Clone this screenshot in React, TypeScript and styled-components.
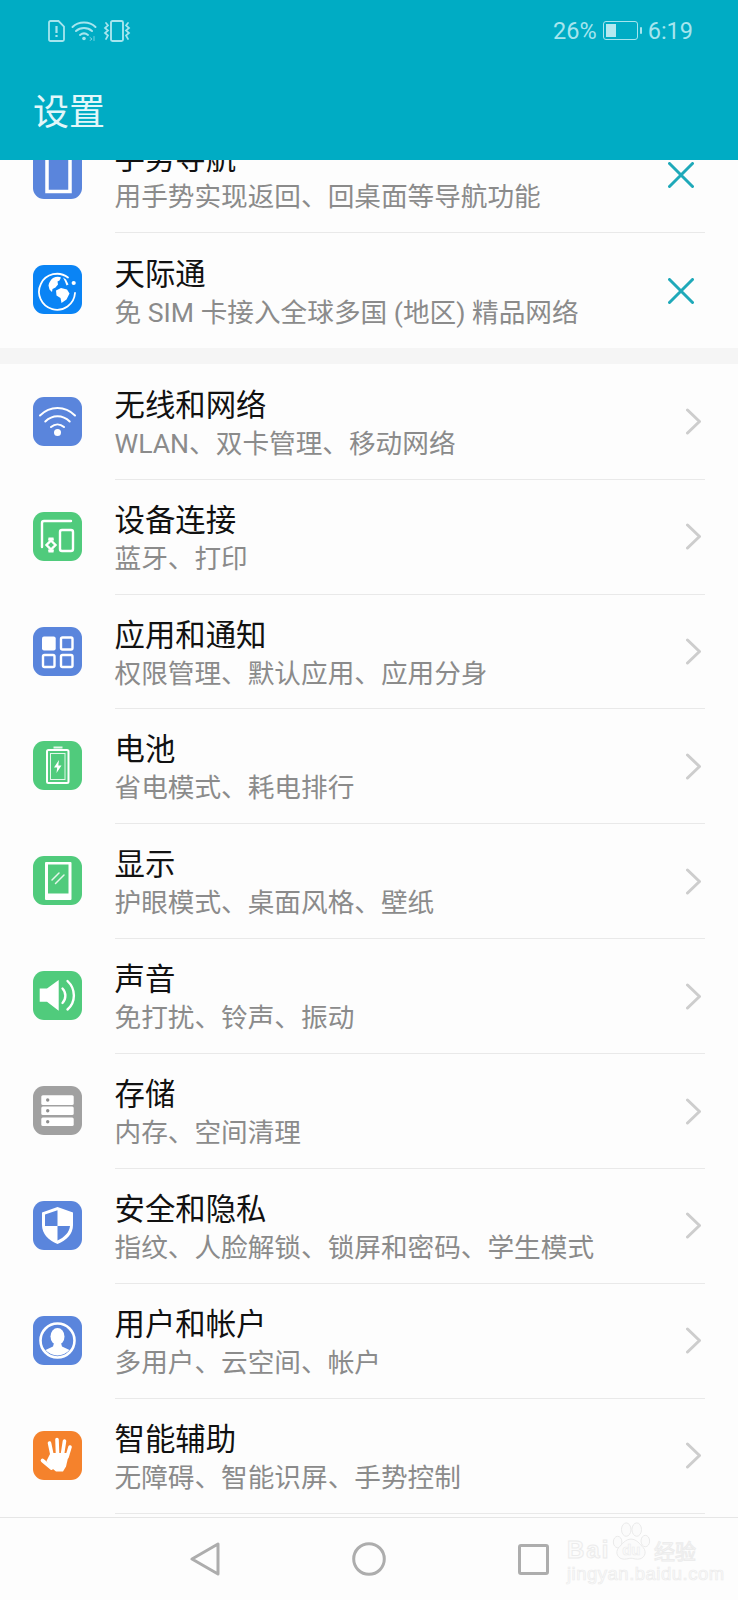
import React from 'react';
import styled, { createGlobalStyle } from 'styled-components';

const GlobalStyle = createGlobalStyle`
  html, body {
    margin: 0;
    padding: 0;
    background: #fdfdfd;
  }
  * {
    box-sizing: border-box;
  }
`;

const Screen = styled.div`
  width: 738px;
  height: 1600px;
  display: flex;
  flex-direction: column;
  overflow: hidden;
  position: relative;
  background: #fdfdfd;
  font-family: Roboto, 'Noto Sans CJK SC', sans-serif;
`;

const Header = styled.header`
  height: 160px;
  flex: none;
  background: #00acc4;
  position: relative;
  z-index: 1;
`;

const StatusBar = styled.div`
  height: 60px;
  padding: 1px 45px 0 48px;
  display: flex;
  align-items: center;
  justify-content: space-between;
  color: #a6e5ee;
  font-size: 23.5px;
`;

const StatusGroup = styled.div`
  display: flex;
  align-items: center;
  gap: 6px;
`;

const PageTitle = styled.h1`
  margin: 0;
  padding: 19px 0 0 33px;
  font-size: 36px;
  line-height: 68px;
  font-weight: 400;
  color: #e2f7fa;
`;

const Scroller = styled.main`
  flex: 1;
  min-height: 0;
  overflow: hidden;
`;

const List = styled.div`
  margin-top: -41.5px;
`;

const Group = styled.section<{ $spaced?: boolean }>`
  background: #fdfdfd;
  border-top: ${(p) => (p.$spaced ? '16px solid #f5f5f5' : 'none')};
  padding-top: ${(p) => (p.$spaced ? '0.5px' : '0')};
`;

const Row = styled.div`
  height: 114.9px;
  display: flex;
  align-items: stretch;
  padding: 0 33px 0 32.5px;
`;

const IconTile = styled.div`
  width: 49px;
  flex: none;
  align-self: center;
  display: flex;
  margin-bottom: 2px;
`;

const RowBody = styled.div<{ $noRule?: boolean }>`
  flex: 1;
  margin-left: 33px;
  display: flex;
  align-items: center;
  justify-content: space-between;
  border-bottom: ${(p) => (p.$noRule ? 'none' : '1.5px solid #e9e9e9')};
`;

const RowText = styled.div`
  display: flex;
  flex-direction: column;
  padding-top: 5px;
`;

const RowTitle = styled.div`
  font-size: 30.4px;
  line-height: 40px;
  color: #111;
`;

const RowSubtitle = styled.div`
  font-size: 26.65px;
  line-height: 37px;
  color: #8b8b8b;
  white-space: nowrap;
`;

const Trailing = styled.div<{ $wide?: boolean }>`
  width: ${(p) => (p.$wide ? '37px' : '19px')};
  flex: none;
  display: flex;
  align-items: center;
`;

const NavBar = styled.nav`
  height: 83px;
  flex: none;
  background: #fdfdfd;
  border-top: 1.5px solid #e6e6e6;
  display: flex;
  align-items: center;
  justify-content: center;
  position: relative;
`;

const NavSlot = styled.div`
  width: 164px;
  display: flex;
  justify-content: center;
`;

const Watermark = styled.div`
  position: absolute;
  left: 567px;
  top: 3px;
  width: 132px;
  color: #fbfbfb;
  font-family: 'Liberation Sans', sans-serif;
  -webkit-text-stroke: 1px #ececec;
  pointer-events: none;
`;

const MarkTop = styled.div`
  display: flex;
  align-items: flex-end;
  justify-content: space-between;
  height: 42px;
`;

const MarkBrand = styled.span`
  flex: none;
  font-size: 24px;
  line-height: 26px;
  font-weight: 700;
  letter-spacing: 2px;
`;

const MarkPaw = styled.div`
  flex: none;
  width: 42px;
  height: 42px;
  position: relative;
  margin-left: -2px;
`;

const MarkPawText = styled.span`
  position: absolute;
  left: 12px;
  bottom: 5px;
  font-size: 15px;
  line-height: 16px;
  font-weight: 700;
  -webkit-text-stroke-width: 0.6px;
`;

const MarkCn = styled.span`
  flex: none;
  font-size: 21px;
  line-height: 26px;
  font-family: 'Noto Sans CJK SC', sans-serif;
  white-space: nowrap;
  margin-right: 3px;
`;

const MarkUrl = styled.div`
  font-size: 18.5px;
  line-height: 22px;
  white-space: nowrap;
  letter-spacing: 0.5px;
  -webkit-text-stroke-width: 0.7px;
`;

const BLUE = '#5a85dc';
const GREEN = '#50cb7c';

const Tile = ({ color, children }: { color: string; children: React.ReactNode }) => (
  <svg width="49" height="49" viewBox="0 0 49 49">
    <rect width="49" height="49" rx="11" fill={color} />
    {children}
  </svg>
);

const icons = {
  gesture: (
    <Tile color={BLUE}>
      <rect x="14" y="3" width="23" height="38.5" fill="none" stroke="#fff" strokeWidth="3.5" />
    </Tile>
  ),
  globe: (
    <Tile color="#0a84f5">
      <path d="M35 12.5A18 18 0 1 0 42 28" fill="none" stroke="#fff" strokeWidth="1.8" strokeLinecap="round" />
      <circle cx="40.7" cy="18" r="2.1" fill="#fff" />
      <circle cx="24.5" cy="25" r="13.5" fill="#0a84f5" />
      <path d="M20 13c3-1.5 6-1.5 8-.5l-1.5 3-2 1 .5 3-2.5 3-3 1.5-.5 3-2.5-2.5-1-4c.5-3 2-5.5 4.5-7.5z" fill="#fff" />
      <path d="M23 25.5l5-2.5 6 1.500 2.500 4-3 6-5 3.500-1-5-4-2.500z" fill="#fff" />
      <path d="M30 12.5l3 2 2.500 5-2 1-1.500-4z" fill="#fff" />
    </Tile>
  ),
  wifi: (
    <Tile color={BLUE}>
      <g fill="none" stroke="#fff" strokeWidth="2" strokeLinecap="round">
        <path d="M7 18.5C17 8.5 32 8.5 42 18.5" />
        <path d="M12.3 24.5C19.5 17.5 29.5 17.5 36.7 24.5" />
        <path d="M18 30C22 26.5 27 26.5 31 30" />
      </g>
      <circle cx="24.5" cy="35.5" r="3.5" fill="#fff" />
    </Tile>
  ),
  devices: (
    <Tile color={GREEN}>
      <g fill="none" stroke="#fff" strokeWidth="2.4" strokeLinecap="round">
        <path d="M9 35V11a2 2 0 0 1 2-2h27" />
        <rect x="27" y="18" width="13" height="21" rx="2" />
        <path d="M18 28.5l4.500 4.500-4.500 4.500-4.500-4.500z" />
      </g>
      <path d="M15.5 25.5h5l.5 3h-6zM15 37.5h6l-.5 3h-5z" fill="#fff" />
    </Tile>
  ),
  apps: (
    <Tile color={BLUE}>
      <rect x="9" y="9.5" width="13.7" height="14" rx="2" fill="#fff" />
      <g fill="none" stroke="#fff" strokeWidth="2.4">
        <rect x="28" y="10.5" width="11.5" height="12" rx="1.5" />
        <rect x="10" y="28" width="11.5" height="12" rx="1.5" />
        <rect x="28" y="28" width="11.5" height="12" rx="1.5" />
      </g>
    </Tile>
  ),
  battery: (
    <Tile color={GREEN}>
      <rect x="20.5" y="5.5" width="9" height="2" fill="#fff" opacity="0.85" />
      <rect x="14" y="9" width="21.5" height="33" rx="1.5" fill="none" stroke="#fff" strokeWidth="2" />
      <rect x="17.5" y="12.5" width="14.5" height="26" fill="none" stroke="#fff" strokeWidth="1" opacity="0.85" />
      <path d="M26 19l-5 7.500h3.200L23.500 32l5-7.500h-3.200z" fill="#fff" />
    </Tile>
  ),
  display: (
    <Tile color={GREEN}>
      <path
        fillRule="evenodd"
        d="M13 6h24.5a1 1 0 0 1 1 1v36a1 1 0 0 1-1 1H13a1 1 0 0 1-1-1V7a1 1 0 0 1 1-1zM15 8.500v29h20.500v-29z"
        fill="#fff"
      />
      <path d="M19 24l7-7M22.5 27.5l8.500-8.500" stroke="#fff" strokeWidth="1.5" strokeLinecap="round" opacity="0.85" />
    </Tile>
  ),
  sound: (
    <Tile color={GREEN}>
      <path d="M6.7 17.5v13.200H14l11.700 9V9L14 17.500z" fill="#fff" />
      <g fill="none" stroke="#fff" strokeWidth="2.4" strokeLinecap="round">
        <path d="M29.5 17.5c3.800 4 3.800 10.500 0 14.500" />
        <path d="M34.5 10c8.500 8 8.500 21 0 28.500" />
      </g>
    </Tile>
  ),
  storage: (
    <Tile color="#a1a1a1">
      <rect x="8.3" y="9.3" width="32.4" height="9.6" rx="1.5" fill="#fff" />
      <rect x="8.3" y="20.5" width="32.4" height="8.6" rx="1.5" fill="#fff" />
      <rect x="8.3" y="31.5" width="32.4" height="8.6" rx="1.5" fill="#fff" />
      <g fill="#8e8e8e">
        <circle cx="14.7" cy="14" r="1.7" />
        <circle cx="14.7" cy="24.8" r="1.7" />
        <circle cx="14.7" cy="35.8" r="1.7" />
      </g>
    </Tile>
  ),
  shield: (
    <Tile color={BLUE}>
      <path d="M24.5 6L40 11.5V24c0 9-6.500 15.500-15.500 19C15.500 39.500 9 33 9 24V11.500z" fill="#fff" />
      <path d="M24.5 9.200L12 13.600V25h12.500zM24.500 25v14.500C31 36.500 36.500 31.500 37 25z" fill={BLUE} />
    </Tile>
  ),
  user: (
    <Tile color={BLUE}>
      <circle cx="24.5" cy="24.5" r="17" fill="none" stroke="#fff" strokeWidth="2.6" />
      <ellipse cx="24.5" cy="20.5" rx="7" ry="8.5" fill="#fff" />
      <path d="M21 27h7l1 3.500 7.500 3.500a16 16 0 0 1-24 0l7.500-3.500z" fill="#fff" />
    </Tile>
  ),
  hand: (
    <Tile color="#f5822c">
      <g stroke="#fff" strokeWidth="3.6" strokeLinecap="round" fill="none">
        <path d="M16.5 12l2.500 12" />
        <path d="M24 8.5l.5 14" />
        <path d="M31.5 10L29.5 23" />
        <path d="M37 16l-3 10" />
        <path d="M9.5 29.5l9 7.500" />
      </g>
      <path d="M17.5 22h17l.5 5-2 8.500-3 5H23l-5.500-4.500-4-6z" fill="#fff" />
    </Tile>
  ),
};

type Item = { title: string; sub: string; icon: keyof typeof icons };

const pinned: Item[] = [
  { title: '手势导航', sub: '用手势实现返回、回桌面等导航功能', icon: 'gesture' },
  { title: '天际通', sub: '免 SIM 卡接入全球多国 (地区) 精品网络', icon: 'globe' },
];

const settings: Item[] = [
  { title: '无线和网络', sub: 'WLAN、双卡管理、移动网络', icon: 'wifi' },
  { title: '设备连接', sub: '蓝牙、打印', icon: 'devices' },
  { title: '应用和通知', sub: '权限管理、默认应用、应用分身', icon: 'apps' },
  { title: '电池', sub: '省电模式、耗电排行', icon: 'battery' },
  { title: '显示', sub: '护眼模式、桌面风格、壁纸', icon: 'display' },
  { title: '声音', sub: '免打扰、铃声、振动', icon: 'sound' },
  { title: '存储', sub: '内存、空间清理', icon: 'storage' },
  { title: '安全和隐私', sub: '指纹、人脸解锁、锁屏和密码、学生模式', icon: 'shield' },
  { title: '用户和帐户', sub: '多用户、云空间、帐户', icon: 'user' },
  { title: '智能辅助', sub: '无障碍、智能识屏、手势控制', icon: 'hand' },
];

const CloseMark = () => (
  <svg width="26" height="26" viewBox="0 0 26 26">
    <path d="M1.5 1.5l23 23M24.5 1.5l-23 23" stroke="#1fa9b9" strokeWidth="3" strokeLinecap="round" />
  </svg>
);

const Chevron = () => (
  <svg width="15" height="27" viewBox="0 0 15 27">
    <path d="M1.5 2l12 11.500L1.500 25" fill="none" stroke="#cdcdcd" strokeWidth="3" strokeLinecap="round" strokeLinejoin="round" />
  </svg>
);

const SettingRow = ({ item, close, noRule }: { item: Item; close?: boolean; noRule?: boolean }) => (
  <Row>
    <IconTile>{icons[item.icon]}</IconTile>
    <RowBody $noRule={noRule}>
      <RowText>
        <RowTitle>{item.title}</RowTitle>
        <RowSubtitle>{item.sub}</RowSubtitle>
      </RowText>
      <Trailing $wide={close}>{close ? <CloseMark /> : <Chevron />}</Trailing>
    </RowBody>
  </Row>
);

const SimAlert = () => (
  <svg width="17" height="22" viewBox="0 0 17 22" fill="none" stroke="currentColor" strokeWidth="1.8">
    <path d="M2.5 1h8L16 6.500V19.500a1.500 1.500 0 0 1-1.500 1.500h-12A1.500 1.500 0 0 1 1 19.500V2.500A1.500 1.500 0 0 1 2.500 1z" />
    <path d="M8.5 6v7M8.500 15v2" strokeWidth="2.2" />
  </svg>
);

const WifiStatus = () => (
  <svg width="26" height="21" viewBox="0 0 26 21" fill="none" stroke="currentColor" strokeWidth="2" strokeLinecap="round">
    <path d="M1.5 7C7.500 1 18.500 1 24.500 7" />
    <path d="M5 11c4.500-4 11.500-4 16 0" />
    <path d="M9 15c2.500-2 5.500-2 8 0" />
    <circle cx="13" cy="18.5" r="1.8" fill="currentColor" stroke="none" />
    <path d="M19 17.5l2 1.500-2 1.500M23 16.500v4" strokeWidth="1" opacity="0.7" />
  </svg>
);

const VibrateStatus = () => (
  <svg width="28" height="22" viewBox="0 0 28 22" fill="none" stroke="currentColor" strokeWidth="1.7" strokeLinecap="round">
    <rect x="8" y="1" width="12" height="20" rx="1.5" strokeWidth="1.9" />
    <path d="M3 3l2 2.500L2 8l3 2.500L2 13l3 2.500L3 19" />
    <path d="M25 3l-2 2.500L26 8l-3 2.500L26 13l-3 2.500L25 19" />
  </svg>
);

const BatteryStatus = () => (
  <svg width="39" height="19" viewBox="0 0 39 19" fill="none" stroke="currentColor">
    <rect x="0.5" y="0.5" width="34" height="18" rx="2.5" strokeWidth="1" />
    <rect x="3" y="3" width="10" height="13" fill="#b5e9f0" stroke="none" />
    <rect x="37" y="6" width="2" height="7" rx="1" fill="currentColor" stroke="none" />
  </svg>
);

const BackKey = () => (
  <svg width="30" height="34" viewBox="0 0 30 34">
    <path d="M28 2v30L2 17z" fill="none" stroke="#adadad" strokeWidth="3" strokeLinejoin="round" />
  </svg>
);

const HomeKey = () => (
  <svg width="34" height="34" viewBox="0 0 34 34">
    <circle cx="17" cy="17" r="15.3" fill="none" stroke="#adadad" strokeWidth="3" />
  </svg>
);

const RecentKey = () => (
  <svg width="31" height="31" viewBox="0 0 31 31">
    <rect x="1.5" y="1.5" width="28" height="28" rx="1.5" fill="none" stroke="#adadad" strokeWidth="3" />
  </svg>
);

const BaiduPaw = () => (
  <svg width="42" height="42" viewBox="0 0 44 42" fill="#fbfbfb" stroke="#e9e9e9" strokeWidth="1">
    <ellipse cx="8" cy="21" rx="4.5" ry="6" />
    <ellipse cx="17" cy="8" rx="5" ry="7" />
    <ellipse cx="28" cy="8" rx="5" ry="7" />
    <ellipse cx="37" cy="20" rx="4.5" ry="6" />
    <path d="M22 18c6 0 9 5 13 9 4 5 1 12-6 12-3 0-5-1-7-1s-4 1-7 1c-7 0-10-7-6-12 4-4 7-9 13-9z" />
  </svg>
);

const App = () => (
  <>
    <GlobalStyle />
    <Screen>
      <Header>
        <StatusBar>
          <StatusGroup>
            <SimAlert />
            <WifiStatus />
            <VibrateStatus />
          </StatusGroup>
          <StatusGroup>
            <span>26%</span>
            <BatteryStatus />
            <span>6:19</span>
          </StatusGroup>
        </StatusBar>
        <PageTitle>设置</PageTitle>
      </Header>
      <Scroller>
        <List>
          <Group>
            {pinned.map((item, i) => (
              <SettingRow key={item.title} item={item} close noRule={i === pinned.length - 1} />
            ))}
          </Group>
          <Group $spaced>
            {settings.map((item) => (
              <SettingRow key={item.title} item={item} />
            ))}
          </Group>
        </List>
      </Scroller>
      <NavBar>
        <NavSlot>
          <BackKey />
        </NavSlot>
        <NavSlot>
          <HomeKey />
        </NavSlot>
        <NavSlot>
          <RecentKey />
        </NavSlot>
        <Watermark>
          <MarkTop>
            <MarkBrand>Bai</MarkBrand>
            <MarkPaw>
              <BaiduPaw />
              <MarkPawText>du</MarkPawText>
            </MarkPaw>
            <MarkCn>经验</MarkCn>
          </MarkTop>
          <MarkUrl>jingyan.baidu.com</MarkUrl>
        </Watermark>
      </NavBar>
    </Screen>
  </>
);

export default App;
